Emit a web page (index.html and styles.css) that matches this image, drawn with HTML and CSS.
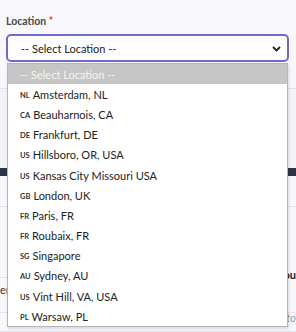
FILE: index.html
```html
<!DOCTYPE html>
<html lang="en">
<head>
    <meta charset="UTF-8" />
    <title>Location</title>
    <link rel="stylesheet" href="styles.css">
</head>
<body>
    <section class="form">
        <div class="field">
            <label class="field-label">Location <span class="req">*</span></label>
            <div class="select">
                <span>-- Select Location --</span>
                <svg class="chevron" width="9" height="6" viewBox="0 0 9 6"><polyline points="1,1 4.5,4.5 8,1" fill="none" stroke="#222" stroke-width="1.8"/></svg>
            </div>
        </div>

        <!-- content under the open list -->
        <div class="behind">
            <div class="row row-head"></div>
            <div class="row row-bar"><div class="bar"></div></div>
            <div class="row row-a"></div>
            <div class="row row-b"><span class="l">er</span><span class="r">ou</span></div>
            <div class="row row-c"><span class="r it">to</span></div>
        </div>

        <ul class="listbox">
            <li class="opt active">-- Select Location --</li>
            <li class="opt"><span class="cc">NL</span>Amsterdam, NL</li>
            <li class="opt"><span class="cc">CA</span>Beauharnois, CA</li>
            <li class="opt"><span class="cc">DE</span>Frankfurt, DE</li>
            <li class="opt"><span class="cc">US</span>Hillsboro, OR, USA</li>
            <li class="opt"><span class="cc">US</span>Kansas City Missouri USA</li>
            <li class="opt"><span class="cc">GB</span>London, UK</li>
            <li class="opt"><span class="cc">FR</span>Paris, FR</li>
            <li class="opt"><span class="cc">FR</span>Roubaix, FR</li>
            <li class="opt"><span class="cc">SG</span>Singapore</li>
            <li class="opt"><span class="cc">AU</span>Sydney, AU</li>
            <li class="opt"><span class="cc">US</span>Vint Hill, VA, USA</li>
            <li class="opt"><span class="cc">PL</span>Warsaw, PL</li>
        </ul>
    </section>
</body>
</html>
```

FILE: styles.css
```css
* {
    margin: 0;
    padding: 0;
    box-sizing: border-box;
}
body {
    width: 296px;
    height: 332px;
    overflow: hidden;
    background: #f8f8fc;
    font-family: Lato, "Noto Sans", sans-serif;
    color: #222;
}
.form {
    position: relative;
    height: 100%;
}
.field {
    padding: 14px 7px 0 6px;
}
.field-label {
    display: block;
    font-size: 10.5px;
    font-weight: 700;
    color: #4a4a4a;
    line-height: 15px;
    margin-bottom: 5px;
}
.req {
    color: #e03a3a;
}
.select {
    height: 28px;
    border: 2px solid #7268c8;
    border-radius: 5px;
    background: #fdfdff;
    display: flex;
    align-items: center;
    justify-content: space-between;
    padding: 0 6px 0 13px;
    font-size: 11px;
}
.chevron {
    margin-top: 1px;
}

/* page content covered by the list */
.behind {
    margin-top: 26px;
}
.row {
    border-top: 1px solid #e2e2ea;
    position: relative;
}
.row-head {
    height: 80px;
    background: #f3f3f8;
}
.row-bar {
    height: 38px;
    border-top: none;
}
.bar {
    height: 8px;
    background: #2e3447;
}
.row-a {
    height: 71px;
}
.row-b {
    height: 35px;
    font-size: 11px;
}
.row-c {
    height: 20px;
    font-size: 11px;
    border-bottom: 1px solid #e2e2ea;
}
.l {
    position: absolute;
    left: 0;
    top: 5px;
    color: #333;
}
.r {
    position: absolute;
    right: 0;
    top: -10px;
    font-weight: 700;
    color: #222;
}
.it {
    top: -2px;
    font-style: italic;
    font-weight: 400;
    color: #999;
}

/* open dropdown list */
.listbox {
    position: absolute;
    top: 63px;
    left: 7px;
    width: 281px;
    list-style: none;
    background: #fff;
    border: 1px solid #b5b5b5;
    box-shadow: 1px 2px 3px rgba(0, 0, 0, 0.12);
}
.opt {
    height: 20.2px;
    display: flex;
    align-items: center;
    padding-left: 12px;
    font-size: 11px;
    white-space: nowrap;
}
.opt.active {
    background: #c6c6c6;
    color: #f4f4f4;
}
.cc {
    font-size: 7.5px;
    font-weight: 700;
    margin-right: 3px;
    margin-top: 2px;
    color: #333;
}
```
